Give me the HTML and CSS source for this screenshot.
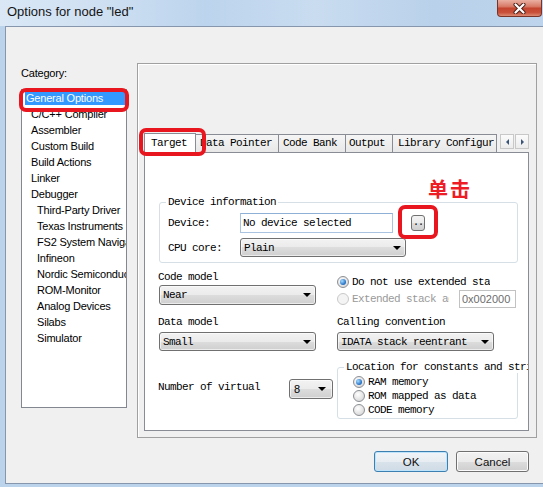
FILE: index.html
```html
<!DOCTYPE html>
<html>
<head>
<meta charset="utf-8">
<title>Options for node "led"</title>
<link rel="stylesheet" href="styles.css">
</head>
<body>
<div class="titlebar">
  <span class="title">Options for node "led"</span>
  <span class="close"><svg width="13" height="11" viewBox="0 0 13 11"><path d="M2.5 1.5 L10.5 9.5 M10.5 1.5 L2.5 9.5" stroke="#4a1d16" stroke-width="4" stroke-linecap="round"/><path d="M2.5 1.5 L10.5 9.5 M10.5 1.5 L2.5 9.5" stroke="#ffffff" stroke-width="2.2" stroke-linecap="round"/></svg></span>
</div>
<div class="window">
  <div class="client">
    <div class="catcol">
      <div class="catlabel">Category:</div>
      <div class="catlist">
        <div class="item sel"><span>General Options</span></div>
        <div class="item">C/C++ Compiler</div>
        <div class="item">Assembler</div>
        <div class="item">Custom Build</div>
        <div class="item">Build Actions</div>
        <div class="item">Linker</div>
        <div class="item">Debugger</div>
        <div class="item l2">Third-Party Driver</div>
        <div class="item l2">Texas Instruments</div>
        <div class="item l2">FS2 System Navigator</div>
        <div class="item l2">Infineon</div>
        <div class="item l2">Nordic Semiconductor</div>
        <div class="item l2">ROM-Monitor</div>
        <div class="item l2">Analog Devices</div>
        <div class="item l2">Silabs</div>
        <div class="item l2">Simulator</div>
        <div class="mark mark-cat"></div>
      </div>
    </div>
    <div class="panel">
      <div class="tabs">
        <div class="tab active t1">Target</div>
        <div class="tab t2">Data Pointer</div>
        <div class="tab t3">Code Bank</div>
        <div class="tab t4">Output</div>
        <div class="tab t5"><span class="clip">Library Configuration</span></div>
        <div class="arrows"><span class="arr"><span class="tri-l"></span></span><span class="arr"><span class="tri-r"></span></span></div>
      </div>
      <div class="tabbody">
        <fieldset class="grp dev">
          <legend>Device information</legend>
          <div class="row r-dev"><span class="lbl">Device:</span><span class="edit">No device selected</span><span class="dots">..</span></div>
          <div class="row r-cpu"><span class="lbl">CPU core:</span><span class="combo cpu">Plain</span></div>
        </fieldset>
        <div class="grid">
          <div class="cell a-left">
            <div class="flabel">Code model</div>
            <div class="combo near">Near</div>
          </div>
          <div class="cell a-right">
            <div class="opt o1"><span class="radio on"></span><span class="otext w1">Do not use extended stack</span></div>
            <div class="opt o2"><span class="radio off"></span><span class="otext w2 dis">Extended stack address</span><span class="hexbox">0x002000</span></div>
          </div>
          <div class="cell b-cell">
            <div class="flabel">Data model</div>
            <div class="combo small">Small</div>
          </div>
          <div class="cell b-cell">
            <div class="flabel">Calling convention</div>
            <div class="combo idata">IDATA stack reentrant</div>
          </div>
          <div class="cell c-left">
            <span class="vlabel">Number of virtual</span>
            <span class="combo eight">8</span>
          </div>
          <div class="cell c-right">
            <fieldset class="grp loc">
              <legend>Location for constants and strings</legend>
              <div class="lopt"><span class="radio on"></span><span>RAM memory</span></div>
              <div class="lopt"><span class="radio"></span><span>ROM mapped as data</span></div>
              <div class="lopt"><span class="radio"></span><span>CODE memory</span></div>
            </fieldset>
          </div>
        </div>
        <div class="mark mark-btn"></div>
        <div class="note">单击</div>
      </div>
      <div class="mark mark-tab"></div>
    </div>
  </div>
  <div class="buttons">
    <span class="btn ok">OK</span>
    <span class="btn">Cancel</span>
  </div>
</div>
</body>
</html>
```
FILE: styles.css
```css
* { box-sizing: border-box; }
html, body { margin: 0; padding: 0; }
body {
  width: 543px;
  height: 487px;
  overflow: hidden;
  background: #bcd3ec;
  font-family: "Liberation Sans", Arial, sans-serif;
  font-size: 11px;
  color: #000;
}

/* title bar */
.titlebar {
  height: 26px;
  display: flex;
  justify-content: space-between;
  align-items: flex-start;
  background: linear-gradient(90deg, #dae8f6 0%, #cfe0f2 18%, #bcd4ed 38%, #c9dcf0 58%, #b9d1ea 80%, #bdd4ec 100%);
}
.title {
  font-size: 13px;
  line-height: 24px;
  padding-left: 7px;
  color: #151515;
}
.close {
  width: 45px;
  height: 17px;
  margin-right: 1px;
  border: 1px solid #7a3327;
  border-top: none;
  border-radius: 0 0 4px 4px;
  background: linear-gradient(#eab0a2, #d87b68 40%, #c4452f 52%, #c9503a 78%, #dc8a73);
  display: flex;
  align-items: center;
  justify-content: center;
}

/* window client */
.window {
  margin-left: 5px;
  width: 538px;
  height: 458px;
  border: 1px solid #8596ad;
  border-right: none;
  background: #f0f0f0;
}
.client {
  display: flex;
  gap: 10px;
  padding: 36px 0 0 15px;
}
.catcol { width: 106px; }
.catlabel {
  margin-top: 3px;
  line-height: 14px;
  letter-spacing: -0.2px;
}
.catlist {
  position: relative;
  margin-top: 9px;
  height: 319px;
  background: #fff;
  border: 1px solid #828790;
}
.item {
  height: 16px;
  line-height: 16px;
  padding-left: 9px;
  white-space: nowrap;
  overflow: hidden;
  letter-spacing: -0.2px;
}
.item.l2 { padding-left: 15px; }
.item.sel { padding: 1px 1px 1px 3px; }
.item.sel span {
  display: block;
  height: 14px;
  line-height: 14px;
  background: #3399ff;
  color: #fff;
  padding-left: 1px;
}

/* annotation marks */
.mark {
  position: absolute;
  border: 4px solid #e8171f;
  border-radius: 7px;
  z-index: 5;
}
.mark-cat { left: -3px; top: -2px; width: 110px; height: 24px; }
.mark-tab { left: 1px; top: 64px; width: 67px; height: 28px; }
.mark-btn { left: 253px; top: 52px; width: 40px; height: 34px; }
.note {
  position: absolute;
  left: 283px;
  top: 24px;
  color: #ee1c25;
  font-family: "Noto Sans CJK SC", sans-serif;
  font-weight: 700;
  font-size: 20px;
  line-height: 24px;
  letter-spacing: 2px;
}

/* panel & tabs */
.panel {
  position: relative;
  width: 400px;
  height: 375px;
  border: 1px solid #a0a0a0;
  box-shadow: inset 1px 1px 0 #ffffff;
  padding: 69px 7px 6px 6px;
}
.tabs {
  display: flex;
  align-items: flex-end;
  height: 19px;
  font-family: "Liberation Mono", monospace;
  font-size: 11px;
  letter-spacing: -0.6px;
}
.tab {
  height: 18px;
  line-height: 16px;
  border: 1px solid #898c95;
  border-bottom: none;
  background: linear-gradient(#f5f5f5, #e8e8e8);
  white-space: nowrap;
  overflow: hidden;
}
.tab.active {
  position: relative;
  z-index: 1;
  height: 20px;
  line-height: 18px;
  margin-bottom: -1px;
  background: #fff;
}
.t1 { width: 52px; padding-left: 6px; }
.t2 { width: 83px; padding-left: 4px; border-left: none; }
.t3 { width: 67px; padding-left: 4px; border-left: none; }
.t4 { width: 47px; padding-left: 3px; border-left: none; }
.t5 { flex: 1; min-width: 0; padding-left: 5px; border-left: none; }
.clip { display: block; width: 96px; overflow: hidden; }
.arrows {
  display: flex;
  gap: 1px;
  margin-left: 3px;
  align-self: flex-start;
  margin-top: 1px;
}
.arr {
  width: 14px;
  height: 15px;
  border: 1px solid #c8c8c8;
  background: linear-gradient(#fbfbfb, #ececec);
  display: flex;
  align-items: center;
  justify-content: center;
}
.tri-l { border-top: 3px solid transparent; border-bottom: 3px solid transparent; border-right: 3px solid #3b5578; }
.tri-r { border-top: 3px solid transparent; border-bottom: 3px solid transparent; border-left: 3px solid #3b5578; }

.tabbody {
  position: relative;
  height: 279px;
  border: 1px solid #898c95;
  background: #fff;
  overflow: hidden;
  font-family: "Liberation Mono", monospace;
  font-size: 11px;
  letter-spacing: -0.6px;
}

/* group boxes */
.grp {
  margin: 0;
  border: 1px solid #d5dfe5;
  border-radius: 3px;
  min-width: 0;
}
.grp legend {
  padding: 0 2px;
  margin-left: -2px;
  line-height: 12px;
  white-space: nowrap;
}
.dev {
  margin: 43px 0 0 14px;
  width: 359px;
  padding: 5px 0 5px 8px;
}
.row { display: flex; align-items: center; }
.r-dev { height: 20px; }
.r-cpu { margin-top: 5px; height: 19px; }
.lbl { width: 72px; }
.edit {
  width: 153px;
  height: 20px;
  line-height: 18px;
  padding-left: 2px;
  border: 1px solid #a9c3e0;
  border-top-color: #8fb0d6;
  background: #fff;
  white-space: nowrap;
}
.dots {
  width: 14px;
  height: 16px;
  margin-left: 18px;
  border: 1px solid #707070;
  border-radius: 3px;
  background: linear-gradient(#f2f2f2, #ebebeb 50%, #dddddd 50%, #cfcfcf);
  display: flex;
  justify-content: center;
  align-items: flex-end;
  line-height: 10px;
  font-size: 10px;
  padding-bottom: 2px;
  letter-spacing: -1px;
}

.combo {
  display: flex;
  align-items: center;
  height: 19px;
  border: 1px solid #707070;
  border-radius: 3px;
  background: linear-gradient(#f2f2f2, #ebebeb 50%, #dddddd 50%, #cfcfcf);
  box-shadow: inset 0 0 0 1px rgba(255, 255, 255, 0.6);
  padding-left: 3px;
  white-space: nowrap;
}
.combo::after {
  content: "";
  margin-left: auto;
  margin-right: 4px;
  border-left: 4px solid transparent;
  border-right: 4px solid transparent;
  border-top: 4px solid #000;
}
.cpu { width: 166px; }
.near { width: 157px; height: 20px; margin-left: 1px; margin-top: 2px; }
.small { width: 157px; margin-left: 1px; margin-top: 4px; }
.idata { width: 157px; margin-top: 4px; }
.eight {
  width: 44px;
  height: 20px;
  font-family: "Liberation Sans", Arial, sans-serif;
  letter-spacing: 0;
  padding-left: 4px;
}
.eight::after { margin-right: 6px; }

/* lower grid */
.grid {
  display: grid;
  grid-template-columns: 179px 181px;
  margin: 8px 0 0 13px;
}
.flabel { line-height: 12px; }
.a-right { padding-top: 3px; }
.opt { display: flex; align-items: center; }
.o1 { height: 16px; }
.o2 { height: 18px; }
.otext { margin-left: 3px; white-space: nowrap; overflow: hidden; }
.w1 { width: 138px; }
.w2 { width: 97px; }
.dis { color: #9a9a9a; }
.hexbox {
  margin-left: 10px;
  width: 57px;
  height: 18px;
  line-height: 16px;
  border: 1px solid #c2c2c2;
  background: #fff;
  color: #6d6d6d;
  font-family: "Liberation Sans", Arial, sans-serif;
  font-size: 11px;
  letter-spacing: 0;
  padding-left: 2px;
}
.b-cell { margin-top: 8px; }
.c-left {
  margin-top: 10px;
  padding-top: 18px;
  display: flex;
  align-items: flex-start;
}
.vlabel { width: 131px; line-height: 12px; margin-top: 2px; }
.c-right { margin-top: 10px; }
.loc {
  width: 181px;
  padding: 2px 0 1px 8px;
}
.lopt {
  display: flex;
  align-items: center;
  height: 14px;
  padding-left: 7px;
  gap: 3px;
  white-space: nowrap;
}

/* radios */
.radio {
  position: relative;
  flex: none;
  width: 12px;
  height: 12px;
  border-radius: 50%;
  border: 1px solid #8c8f93;
  background: radial-gradient(circle at 40% 35%, #ffffff, #d8d8d8 80%);
}
.radio.on::after {
  content: "";
  position: absolute;
  left: 2px;
  top: 2px;
  width: 6px;
  height: 6px;
  border-radius: 50%;
  background: radial-gradient(circle at 35% 35%, #a6dcff, #1f6cc2 70%, #18529a);
}
.radio.off {
  border-color: #c9c9c9;
  background: #f4f4f4;
}

/* dialog buttons */
.buttons {
  display: flex;
  justify-content: flex-end;
  gap: 8px;
  margin-top: 13px;
  padding-right: 14px;
}
.btn {
  width: 73px;
  height: 21px;
  display: flex;
  align-items: center;
  justify-content: center;
  border: 1px solid #707070;
  border-radius: 3px;
  background: linear-gradient(#f2f2f2, #ebebeb 50%, #dddddd 50%, #cfcfcf);
  box-shadow: inset 0 0 0 1px #fbfbfb;
  font-size: 11.5px;
  color: #111;
}
.btn.ok {
  width: 74px;
  border-color: #3c7fb1;
  background: linear-gradient(#f1f5f9, #e7edf2 50%, #d9e3eb 50%, #cfdbe6);
  box-shadow: inset 0 0 0 1px #bde4fa;
}
```
